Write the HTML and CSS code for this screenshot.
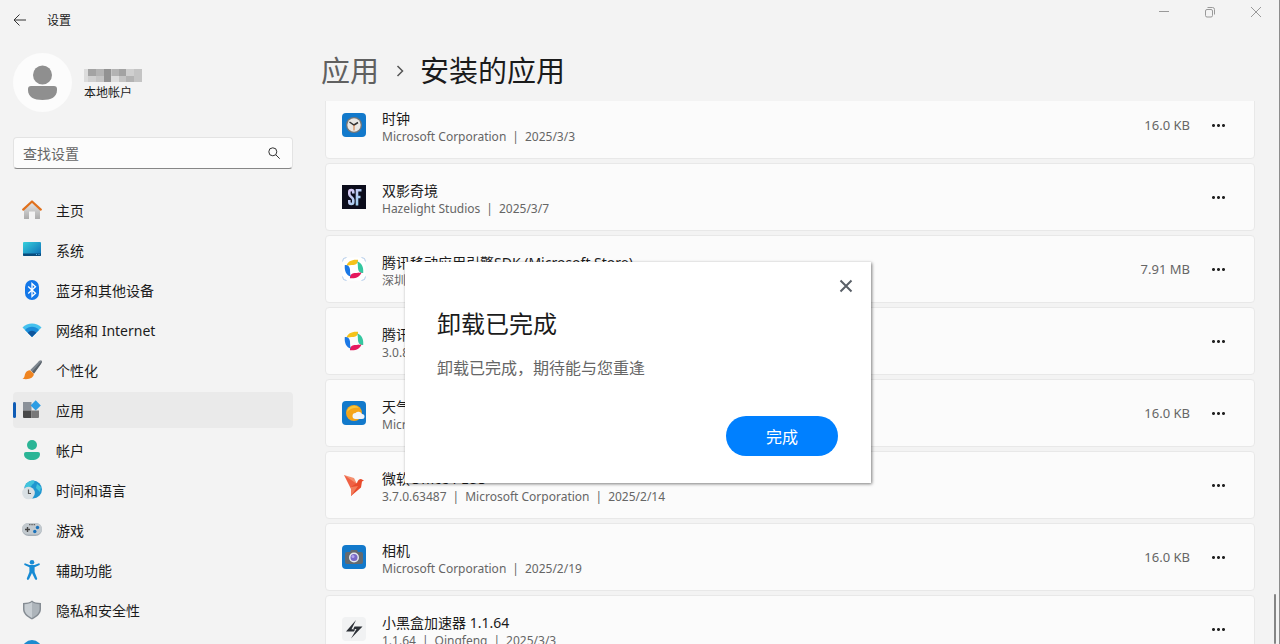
FILE: index.html
```
<!DOCTYPE html>
<html lang="zh-CN">
  <head>
    <meta charset="utf-8">
    <meta name="viewport" content="width=device-width, initial-scale=1">
    <title>设置</title>
    <link rel="stylesheet" href="styles.css">
  </head>
  <body>
    <header class="titlebar">
      <button class="back" aria-label="返回">
        <svg width="14" height="14" viewBox="0 0 14 14" fill="none" stroke="#333"><path d="M13 7H1.5M6.5 1.5L1 7l5.5 5.5"/></svg>
      </button>
      <span class="window-title">设置</span>
      <div class="window-controls">
        <button aria-label="最小化"><svg width="12" height="12" viewBox="0 0 12 12" fill="none" stroke="#999"><path d="M1 5.5h10"/></svg></button>
        <button aria-label="还原"><svg width="12" height="12" viewBox="0 0 12 12" fill="none" stroke="#999"><rect x="1.5" y="3.5" width="7" height="7.500" rx="1.500"/><path d="M3.500 1.500h5a2 2 0 0 1 2 2v5"/></svg></button>
        <button aria-label="关闭"><svg width="12" height="12" viewBox="0 0 12 12" fill="none" stroke="#999"><path d="M1 1l10 10M11 1L1 11"/></svg></button>
      </div>
    </header>

    <div class="layout">
      <aside class="sidebar">
        <div class="profile">
          <div class="avatar">
            <svg width="29" height="36" viewBox="0 0 29 36" fill="#8f8f8f"><circle cx="14.500" cy="10" r="9.500"/><path d="M3 21h23q3 0 3 3v1c0 7-6 10-14.500 10S0 32 0 25v-1q0-3 3-3z"/></svg>
          </div>
          <div class="profile-text">
            <svg class="masked-name" width="58" height="13" viewBox="0 0 58 13" shape-rendering="crispEdges">
              <path fill="#c4c4c4" d="M0 0h58v13H0z"/>
              <path fill="#dcdcdc" d="M0 0h4v13H0zM27 7h8v6h-8z"/>
              <path fill="#a3a3a3" d="M4 0h8v7H4zM35 0h7v7h-7z"/>
              <path fill="#929292" d="M20 0h7v13h-7z"/>
              <path fill="#b3b3b3" d="M12 0h8v7h-8zM28 0h7v7h-7zM42 7h8v6h-8z"/>
              <path fill="#cfcfcf" d="M4 7h8v6H4zM42 0h8v7h-8z"/>
            </svg>
            <span>本地帐户</span>
          </div>
        </div>

        <div class="search">
          <input type="text" placeholder="查找设置" aria-label="查找设置">
          <svg width="12" height="12" viewBox="0 0 12 12" fill="none" stroke="#333"><circle cx="4.800" cy="4.800" r="4"/><path d="M7.700 7.700l4 4"/></svg>
        </div>

        <nav class="nav">
          <a href="#">
            <svg width="20" height="20" viewBox="0 0 20 20">
              <defs><linearGradient id="wall" x2="0" y2="1"><stop stop-color="#e6e6e6"/><stop offset="1" stop-color="#ababab"/></linearGradient></defs>
              <path fill="url(#wall)" d="M2 9l8-7 8 7v9.500q0 .5-.5.500H13v-7.500H7V19H2.500q-.5 0-.5-.500z"/>
              <path fill="none" stroke="#e0701c" stroke-width="2.200" stroke-linecap="round" stroke-linejoin="round" d="M1.200 9.600L10 1.500l8.800 8.100"/>
            </svg>主页</a>
          <a href="#">
            <svg width="20" height="20" viewBox="0 0 20 20">
              <defs><linearGradient id="screen" x2="1" y2="1"><stop stop-color="#35d0dc"/><stop offset="1" stop-color="#0c69b4"/></linearGradient></defs>
              <rect x="1" y="2" width="18" height="14" rx="1" fill="url(#screen)"/>
              <path fill="#084b7c" d="M1 13.500h18V15q0 1-1 1H2q-1 0-1-1z"/><path fill="#56b8e8" d="M14 14h1v1h-1zM16.500 14h1v1h-1z"/>
            </svg>系统</a>
          <a href="#">
            <svg width="20" height="20" viewBox="0 0 20 20"><rect x="3" y="0" width="14" height="20" rx="7" fill="#1377e8"/><path fill="none" stroke="#fff" stroke-width="1.300" d="M6.200 6.500l7.300 6.800L10 16.500v-13l3.500 3.200-7.300 6.800"/></svg>蓝牙和其他设备</a>
          <a href="#">
            <svg width="20" height="20" viewBox="0 0 20 20">
              <path fill="#45c1ee" d="M.5 7.500C5.500 2 14.500 2 19.500 7.500L10 17z"/>
              <path fill="#1a8bd8" d="M3 10c4-4.300 10-4.300 14 0l-7 7z"/>
              <path fill="#0f559c" d="M5.700 12.700c2.500-2.700 6.100-2.700 8.600 0L10 17z"/>
            </svg>网络和 Internet</a>
          <a href="#">
            <svg width="20" height="20" viewBox="0 0 20 20">
              <path fill="#7e8790" d="M19.500.6c.9.900-.1 2.600-1 4L12 13.500 8.200 10l7.500-7.600C17 1 18.600-.2 19.500.6z"/>
              <path fill="#596169" d="M19.700.9c.5 1-.4 2.500-1.200 3.700L12 13.500l-1.800-1.700z"/>
              <path fill="#ef8420" d="M8 10.200l3.800 3.600c.2 4-4.800 6.200-11.300 5 2.500-1 1.700-3.200 3-5.800C4.500 11 6.400 10.100 8 10.200z"/>
            </svg>个性化</a>
          <a href="#" class="active" aria-current="page">
            <svg width="20" height="20" viewBox="0 0 20 20">
              <path fill="#8b9199" d="M1 2h8.500v8.500H1z"/><path fill="#484848" d="M1 10.500h8.500V18H2q-1 0-1-1z"/><path fill="#787878" d="M9.500 10.500H17V17q0 1-1 1H9.500z"/>
              <path fill="#2d9de4" d="M13.700.3l5.100 5.100-5.100 5.100-5.100-5.100z"/>
            </svg>应用</a>
          <a href="#">
            <svg width="20" height="20" viewBox="0 0 20 20" fill="#2bb596"><circle cx="10" cy="5" r="5"/><path d="M4 12h12q2 0 2 2c0 4-3.500 6-8 6s-8-2-8-6q0-2 2-2z"/></svg>帐户</a>
          <a href="#">
            <svg width="20" height="20" viewBox="0 0 20 20">
              <circle cx="11" cy="9.500" r="9" fill="#2196d0"/><path fill="#42c4dc" d="M3 6c1-3 4-5.500 8-5.500 2 0 2 2 0 3.500S9 8 6 8 3 7 3 6zM15 4l4 3-1 5-4-4z"/>
              <circle cx="6.500" cy="13" r="6.300" fill="#d9e0e4"/><path fill="none" stroke="#555" stroke-width="1.200" d="M6.500 9.500v4H9"/>
            </svg>时间和语言</a>
          <a href="#">
            <svg width="20" height="20" viewBox="0 0 20 20">
              <rect x="0" y="3" width="20" height="13" rx="6.500" fill="#a6afb7"/><rect x="0" y="3" width="20" height="11.500" rx="5.750" fill="#c2c9ce"/>
              <path stroke="#444" stroke-width="1.400" d="M3 9.500h5M5.500 7v5"/><path fill="#666" d="M7 4h1.500v1.200H7zM9.300 4h1.500v1.200H9.300zM11.600 4h1.500v1.200h-1.500z"/>
              <circle cx="15.500" cy="7.500" r="1.700" fill="#1a72bb"/><circle cx="12.800" cy="11.500" r="1.700" fill="#1a72bb"/>
            </svg>游戏</a>
          <a href="#">
            <svg width="20" height="20" viewBox="0 0 20 20" fill="#178bd4"><circle cx="10" cy="2.300" r="2.300"/><path d="M3 3.300q-1 .2-.8 1.200.2.600.8.800L7.400 7.300V12l-2.600 6.500q0 1.200 1.100 1.400.9 0 1.200-.8L10 13l2.900 6.100q.3.800 1.200.8 1.100-.2 1.100-1.400L12.600 12V7.300L17 5.300q.6-.2.800-.8.200-1-.8-1.200L12.500 5h-5z"/></svg>辅助功能</a>
          <a href="#">
            <svg width="20" height="20" viewBox="0 0 20 20"><path fill="#858c93" d="M10 .5c2 1.800 5 2.500 9 2.500v6c0 4.500-3.500 7.800-9 10.500C4.500 16.800 1 13.500 1 9V3c4 0 7-.7 9-2.500z"/><path fill="#c7cdd2" d="M10 2v16c-4.700-2.500-7.500-5.300-7.500-9V4.200C6 4.100 8.300 3.400 10 2z"/><path fill="#adb4ba" d="M10 2v16c4.700-2.500 7.500-5.300 7.500-9V4.200C14 4.100 11.700 3.400 10 2z"/></svg>隐私和安全性</a>
          <a href="#">
            <svg width="20" height="20" viewBox="0 0 20 20"><circle cx="10" cy="10" r="10" fill="#1d8bcf"/><path fill="none" stroke="#fff" stroke-width="1.500" d="M5 10a5 5 0 0 1 9-3M15 10a5 5 0 0 1-9 3"/></svg>Windows 更新</a>
        </nav>
      </aside>

      <main class="content">
        <h1 class="breadcrumb">
          <a href="#">应用</a>
          <svg width="8" height="12" viewBox="0 0 8 12" fill="none" stroke="#555" stroke-width="1.500"><path d="M1.500 1l5 5-5 5"/></svg>
          <span>安装的应用</span>
        </h1>

        <div class="list-view">
          <ul class="app-list">
            <li class="app">
              <svg width="24" height="24" viewBox="0 0 24 24"><rect width="24" height="24" rx="4" fill="#1279cb"/><circle cx="12" cy="12" r="8" fill="#777"/><circle cx="12" cy="12" r="6.700" fill="#e9e7e4"/><path stroke="#333" stroke-width="1.500" fill="none" d="M7.500 9L12 12l4-2.500"/><path stroke="#d6783a" d="M12 12v5.500"/></svg>
              <div class="app-text"><span class="app-name">时钟</span><span class="app-meta">Microsoft Corporation<i>|</i>2025/3/3</span></div>
              <span class="app-size">16.0 KB</span>
              <button class="more" aria-label="更多选项"></button>
            </li>
            <li class="app">
              <svg width="24" height="24" viewBox="0 0 24 24"><defs><linearGradient id="sf" x2="1" y2="1"><stop stop-color="#d9c7f2"/><stop offset="1" stop-color="#8fd0ef"/></linearGradient></defs><path fill="#0b0c1b" d="M0 0h24v24H0z"/><path fill="none" stroke="url(#sf)" stroke-width="2.600" d="M11.300 8.500V7q0-2-2-2t-2 2v2q0 1.500 2 3t2 3v2q0 2-2 2t-2-2v-2M15 20.500V5.300h4.500M15 12h3.500"/></svg>
              <div class="app-text"><span class="app-name">双影奇境</span><span class="app-meta">Hazelight Studios<i>|</i>2025/3/7</span></div>
              <button class="more" aria-label="更多选项"></button>
            </li>
            <li class="app">
              <svg width="24" height="24" viewBox="0 0 24 24">
                <defs><path id="petal" d="M4.500 8.800C5.500 4.500 10 2.200 16 2.800c.3 3.200-1.800 5-4.500 5.200-2.500.1-5 .1-7 .8z"/></defs>
                <rect x=".5" y=".5" width="23" height="23" rx="6" fill="#fff"/>
                <path fill="none" stroke="#b3cdea" d="M.5 4.500q0-4 4-4M19.500.5q4 0 4 4M23.500 19.500q0 4-4 4M4.500 23.500q-4 0-4-4"/>
                <use href="#petal" fill="#f5c21b"/><use href="#petal" fill="#35c7a0" transform="rotate(90 12 12)"/><use href="#petal" fill="#e5195d" transform="rotate(180 12 12)"/><use href="#petal" fill="#1b78e6" transform="rotate(270 12 12)"/>
              </svg>
              <div class="app-text"><span class="app-name">腾讯移动应用引擎SDK (Microsoft Store)</span><span class="app-meta">深圳市腾讯计算机系统有限公司</span></div>
              <span class="app-size">7.91 MB</span>
              <button class="more" aria-label="更多选项"></button>
            </li>
            <li class="app">
              <svg width="24" height="24" viewBox="0 0 24 24"><use href="#petal" fill="#f5c21b"/><use href="#petal" fill="#35c7a0" transform="rotate(90 12 12)"/><use href="#petal" fill="#e5195d" transform="rotate(180 12 12)"/><use href="#petal" fill="#1b78e6" transform="rotate(270 12 12)"/></svg>
              <div class="app-text"><span class="app-name">腾讯</span><span class="app-meta">3.0.8</span></div>
              <button class="more" aria-label="更多选项"></button>
            </li>
            <li class="app">
              <svg width="24" height="24" viewBox="0 0 24 24"><rect width="24" height="24" rx="4" fill="#1279cb"/><circle cx="12" cy="12" r="8" fill="#f5a51b"/><path fill="#fbc63a" d="M5 11a7 7 0 0 1 12-4q-7-1-12 4z"/><path fill="#f1f5fc" d="M13.500 18a3 3 0 0 1 0-6 4 4 0 0 1 6.500 1 2.500 2.500 0 0 1 0 5z"/></svg>
              <div class="app-text"><span class="app-name">天气</span><span class="app-meta">Microsoft Corporation</span></div>
              <span class="app-size">16.0 KB</span>
              <button class="more" aria-label="更多选项"></button>
            </li>
            <li class="app">
              <svg width="24" height="24" viewBox="0 0 24 24"><path fill="#f4906f" d="M2 2l10 3 3 6-3 3z"/><path fill="#ef6144" d="M2 2l13 9-6 5z"/><path fill="#e94b2c" d="M15 10q1-4 4-4l3 1.500-2 1-1 6-10 8.500V14z"/><path fill="#f27d5c" d="M9 14l7-1-7 10z"/></svg>
              <div class="app-text"><span class="app-name">微软Office PLUS</span><span class="app-meta">3.7.0.63487<i>|</i>Microsoft Corporation<i>|</i>2025/2/14</span></div>
              <button class="more" aria-label="更多选项"></button>
            </li>
            <li class="app">
              <svg width="24" height="24" viewBox="0 0 24 24"><rect width="24" height="24" rx="4" fill="#1279cb"/><path fill="#646a70" d="M5 7h3l1-2h6l1 2h3q2 0 2 2v8q0 2-2 2H5q-2 0-2-2V9q0-2 2-2z"/><circle cx="12" cy="12.500" r="5" fill="#e5e8f0"/><circle cx="12" cy="12.500" r="3.500" fill="#7869c7"/><circle cx="11" cy="11.500" r="1.500" fill="#b3a8ef"/></svg>
              <div class="app-text"><span class="app-name">相机</span><span class="app-meta">Microsoft Corporation<i>|</i>2025/2/19</span></div>
              <span class="app-size">16.0 KB</span>
              <button class="more" aria-label="更多选项"></button>
            </li>
            <li class="app">
              <svg width="24" height="24" viewBox="0 0 24 24"><rect width="24" height="24" rx="4" fill="#f1f2f3"/><path fill="#2c3036" d="M14 3L4 14.500h8l1.200-2.300H9.500zM12.500 9.500h8L9 21.500l5.500-9.500h-3.200z"/></svg>
              <div class="app-text"><span class="app-name">小黑盒加速器 1.1.64</span><span class="app-meta">1.1.64<i>|</i>Qingfeng<i>|</i>2025/3/3</span></div>
              <button class="more" aria-label="更多选项"></button>
            </li>
          </ul>
        </div>
      </main>
    </div>

    <div class="scroll-thumb"></div>

    <div class="dialog" role="dialog" aria-labelledby="dialog-title">
      <button class="dialog-close" aria-label="关闭">
        <svg width="14" height="14" viewBox="0 0 14 14" fill="none" stroke="#5a6068" stroke-width="2"><path d="M1.500 1.500l11 11M12.500 1.500l-11 11"/></svg>
      </button>
      <h2 id="dialog-title">卸载已完成</h2>
      <p>卸载已完成，期待能与您重逢</p>
      <button class="dialog-done">完成</button>
    </div>
  </body>
</html>
```
FILE: styles.css
```
* {
  box-sizing: border-box;
}

body {
  margin: 0;
  height: 100vh;
  display: flex;
  flex-direction: column;
  position: relative;
  overflow: hidden;
  background: #f3f3f3;
  border-right: 1px solid #8c8c8c;
  color: #1b1b1b;
  font-family: "Noto Sans", "Noto Sans CJK SC", sans-serif;
  font-size: 14px;
}

button {
  padding: 0;
  border: none;
  background: none;
  font-family: inherit;
  cursor: pointer;
}

a {
  color: inherit;
  text-decoration: none;
}

svg {
  display: block;
  flex-shrink: 0;
}

/* title bar */
.titlebar {
  flex: 0 0 40px;
  display: flex;
  align-items: center;
  padding-left: 13px;
}

.window-title {
  margin-left: 20px;
  font-size: 12px;
}

.window-controls {
  display: flex;
  align-self: flex-start;
  margin-left: auto;
}

.window-controls button {
  width: 46px;
  height: 24px;
  display: flex;
  align-items: center;
  justify-content: center;
}

.layout {
  flex: 1;
  min-height: 0;
  display: flex;
}

/* sidebar */
.sidebar {
  flex: 0 0 293px;
  padding: 13px 0 0 13px;
  overflow: hidden;
}

.profile {
  display: flex;
  align-items: center;
  gap: 12px;
}

.avatar {
  width: 59px;
  height: 59px;
  display: flex;
  align-items: center;
  justify-content: center;
  border-radius: 50%;
  background: #fcfcfc;
}

.profile-text {
  padding-top: 5px;
  font-size: 12px;
  line-height: 18px;
}

.masked-name {
  margin-bottom: 2px;
}

.search {
  display: flex;
  align-items: center;
  height: 32px;
  margin-top: 25px;
  padding: 0 12px 0 9px;
  border: 1px solid #e3e3e3;
  border-bottom-color: #868686;
  border-radius: 4px;
  background: #fcfcfc;
}

.search input {
  flex: 1;
  min-width: 0;
  padding: 0;
  border: none;
  outline: none;
  background: none;
  font-family: inherit;
  font-size: 14px;
}

.search input::placeholder {
  color: #666;
}

.nav {
  display: flex;
  flex-direction: column;
  gap: 4px;
  margin-top: 23px;
}

.nav a {
  flex: 0 0 36px;
  display: flex;
  align-items: center;
  gap: 14px;
  padding-left: 9px;
  border-radius: 4px;
}

.nav .active {
  position: relative;
  background: #eaeaea;
}

.nav .active::before {
  content: "";
  position: absolute;
  left: 0;
  top: 10px;
  width: 3px;
  height: 16px;
  border-radius: 2px;
  background: #0f5cb5;
}

/* installed apps */
.content {
  flex: 1;
  min-width: 0;
  display: flex;
  flex-direction: column;
  padding: 0 24px 0 28px;
}

.breadcrumb {
  flex: 0 0 61px;
  display: flex;
  align-items: center;
  margin: 0;
  padding-bottom: 3px;
  font-size: 29px;
  font-weight: 400;
}

.breadcrumb a {
  color: #606060;
}

.breadcrumb svg {
  margin: 3px 16px 0 17px;
}

.list-view {
  flex: 1;
  min-height: 0;
  margin-left: 4px;
  overflow: hidden;
}

/* list is scrolled a little, so the first card is cut at the top */
.app-list {
  display: flex;
  flex-direction: column;
  gap: 4px;
  margin: -10px 0 0;
  padding: 0;
  list-style: none;
}

.app {
  height: 68px;
  display: flex;
  align-items: center;
  padding: 0 20px 0 16px;
  border: 1px solid #e8e8e8;
  border-radius: 4px;
  background: #fbfbfb;
}

.app-text {
  flex: 1;
  display: flex;
  flex-direction: column;
  margin-left: 16px;
  padding-top: 3px;
}

.app-name {
  line-height: 19px;
}

.app-meta {
  color: #666;
  font-size: 12px;
  line-height: 17px;
}

.app-meta i {
  margin: 0 6px;
  font-style: normal;
}

.app-size {
  color: #666;
  font-size: 13px;
}

.more {
  width: 32px;
  height: 32px;
  margin-left: 12px;
}

.more::before {
  content: "";
  display: block;
  width: 15px;
  height: 5px;
  margin: 0 auto;
  background: radial-gradient(circle, #222 1px, transparent 2px) 0 0 / 5px 5px;
}

.scroll-thumb {
  position: absolute;
  right: 3px;
  top: 594px;
  bottom: 0;
  width: 2px;
  border-radius: 1px;
  background: #858585;
}

/* uninstall dialog */
.dialog {
  position: absolute;
  left: 405px;
  top: 262px;
  width: 466px;
  display: flex;
  flex-direction: column;
  padding: 16px 33px 27px 32px;
  background: #fff;
  box-shadow: 1px 1px 3px rgba(0, 0, 0, 0.5);
}

.dialog-close {
  align-self: flex-end;
  margin-right: -16px;
  padding: 1px;
}

.dialog h2 {
  margin: 12px 0 0;
  font-size: 24px;
  font-weight: 400;
  line-height: 36px;
}

.dialog p {
  margin: 14px 0 0;
  color: #666;
  font-size: 16px;
  line-height: 24px;
}

.dialog-done {
  align-self: flex-end;
  width: 112px;
  height: 40px;
  margin-top: 36px;
  border-radius: 20px;
  background: #0080ff;
  color: #fff;
  font-size: 16px;
}
```
